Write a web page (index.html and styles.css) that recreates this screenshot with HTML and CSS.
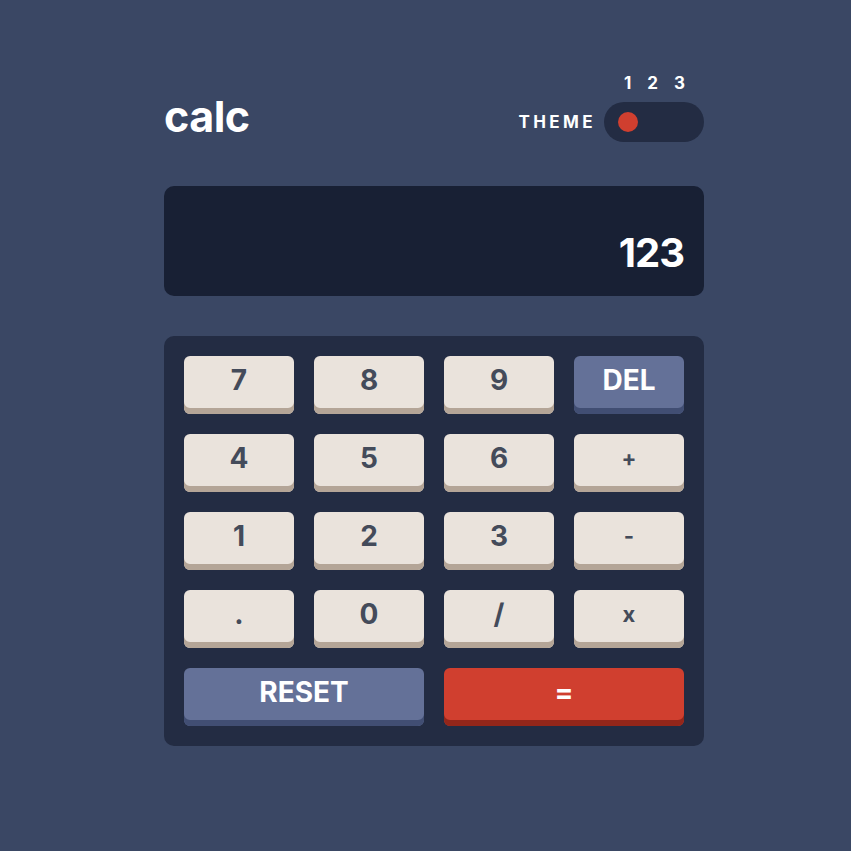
FILE: index.html
```html
<!DOCTYPE html>
<html lang="en">
<head>
<meta charset="utf-8">
<title>calc</title>
<link rel="stylesheet" href="styles.css">
</head>
<body>
<main class="calc">
  <header class="top">
    <h1 class="logo">calc</h1>
    <div class="theme">
      <span class="theme-label">THEME</span>
      <div class="switch-wrap">
        <div class="switch-nums"><span>1</span><span>2</span><span>3</span></div>
        <div class="switch"><span class="knob"></span></div>
      </div>
    </div>
  </header>
  <section class="screen">123</section>
  <section class="pad">
    <button class="key">7</button>
    <button class="key">8</button>
    <button class="key">9</button>
    <button class="key key-blue">DEL</button>
    <button class="key">4</button>
    <button class="key">5</button>
    <button class="key">6</button>
    <button class="key key-op">+</button>
    <button class="key">1</button>
    <button class="key">2</button>
    <button class="key">3</button>
    <button class="key key-op">-</button>
    <button class="key">.</button>
    <button class="key">0</button>
    <button class="key">/</button>
    <button class="key key-op">x</button>
    <button class="key key-blue key-wide">RESET</button>
    <button class="key key-red key-wide">=</button>
  </section>
</main>
</body>
</html>
```
FILE: styles.css
```css
* { box-sizing: border-box; }
html, body { margin: 0; padding: 0; }
body {
  background: #3a4764;
  font-family: "Inter", "Open Sans", sans-serif;
  font-weight: 700;
  color: #ffffff;
  width: 851px;
  height: 851px;
}
.calc {
  width: 540px;
  margin-left: 164px;
  padding-top: 72px;
}
.top {
  display: flex;
  justify-content: space-between;
  align-items: flex-end;
  height: 70px;
}
.logo {
  margin: 0;
  font-size: 43px;
  line-height: 1;
  font-weight: 700;
  letter-spacing: -0.5px;
  padding-bottom: 4px;
}
.theme {
  display: flex;
  align-items: flex-end;
  gap: 8px;
}
.theme-label {
  font-size: 17px;
  letter-spacing: 3.4px;
  line-height: 1;
  padding-bottom: 11px;
}
.switch-wrap {
  display: flex;
  flex-direction: column;
  align-items: stretch;
}
.switch-nums {
  display: flex;
  justify-content: space-between;
  padding: 0 19px 0 20px;
  font-size: 17px;
  line-height: 1;
  margin-bottom: 10px;
}
.switch {
  width: 100px;
  height: 40px;
  border-radius: 20px;
  background: #232c43;
  display: flex;
  align-items: center;
  padding-left: 14px;
}
.knob {
  width: 20px;
  height: 20px;
  border-radius: 50%;
  background: #d03f2f;
}
.screen {
  margin-top: 44px;
  height: 110px;
  border-radius: 10px;
  background: #182034;
  display: flex;
  align-items: center;
  justify-content: flex-end;
  padding: 22px 20px 0 0;
  font-size: 40px;
  letter-spacing: -1px;
}
.pad {
  margin-top: 40px;
  background: #232c43;
  border-radius: 10px;
  padding: 20px;
  display: grid;
  grid-template-columns: repeat(4, 110px);
  grid-auto-rows: 58px;
  gap: 20px;
}
.key {
  border: 0;
  border-radius: 6px;
  background: #eae3dc;
  color: #444b5a;
  font-family: inherit;
  font-weight: 700;
  font-size: 28px;
  line-height: 1;
  padding: 0 0 10px 0;
  box-shadow: inset 0 -6px 0 #b4a597;
  display: flex;
  align-items: center;
  justify-content: center;
}
.key-op { font-size: 22px; }
.key-blue {
  background: #647198;
  color: #ffffff;
  box-shadow: inset 0 -6px 0 #414e73;
}
.key-red {
  background: #d03f2f;
  color: #ffffff;
  box-shadow: inset 0 -6px 0 #93261a;
}
.key-wide { grid-column: span 2; }
```
